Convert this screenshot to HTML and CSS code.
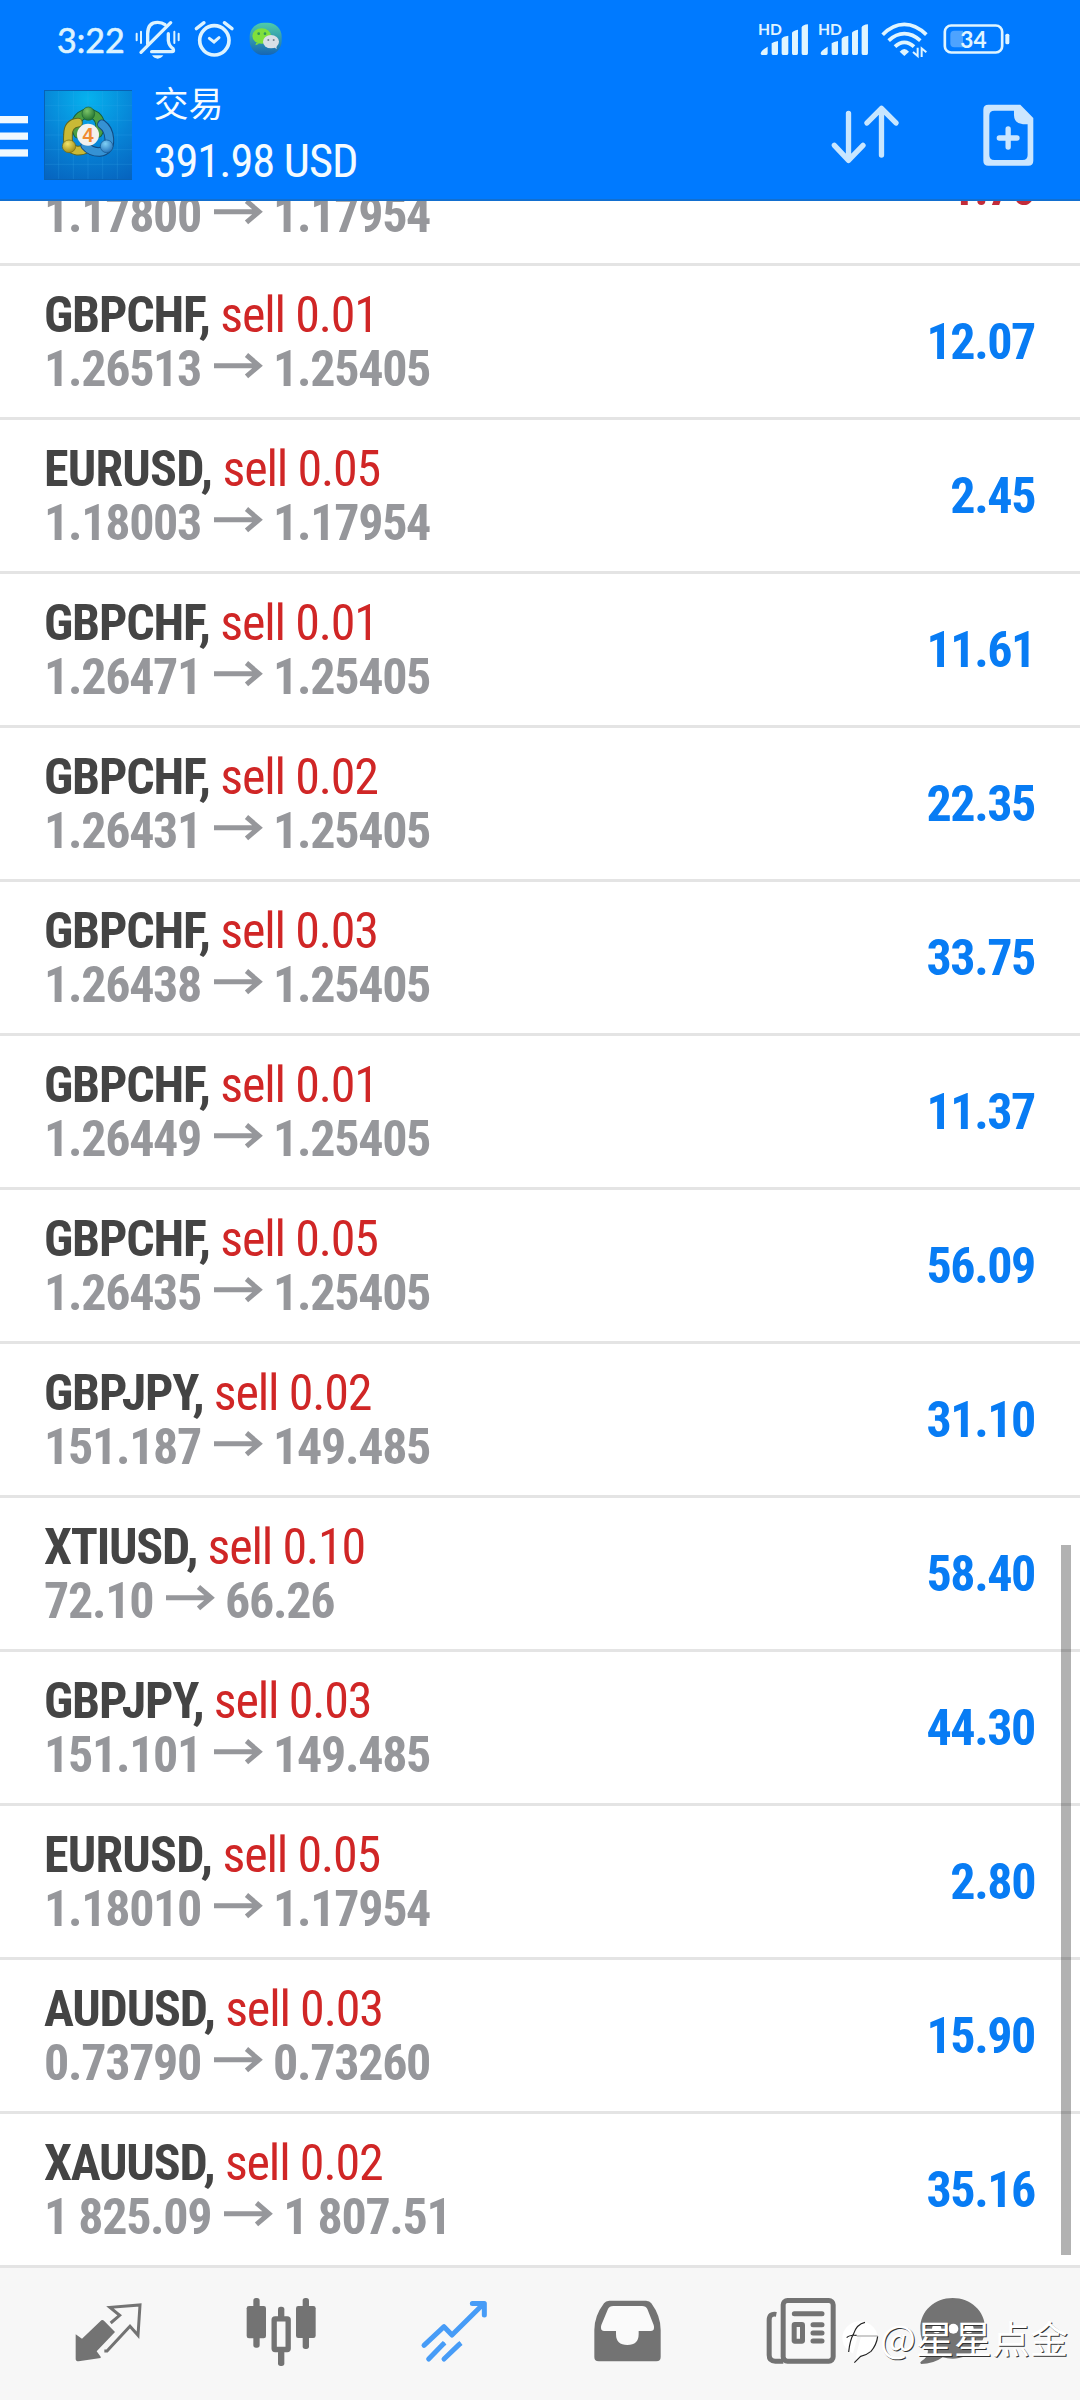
FILE: index.html
```html
<!DOCTYPE html>
<html lang="zh-CN">
<head>
<meta charset="utf-8">
<title>交易</title>
<link rel="stylesheet" href="styles.css">
</head>
<body>
<svg width="0" height="0" class="defs">
  <symbol id="arrow" viewBox="0 0 49 54">
    <path d="M0 23.700H44M32.500 13L45 23.700L32.500 34.400" fill="none" stroke="#96979b" stroke-width="5"/>
  </symbol>
  <symbol id="signal" viewBox="50 60 160 120">
    <g fill="#e0f5ff">
      <path d="M61 160q0-8 21-20v20q0 5-4 5H65q-4 0-4-5zM94 130q6-5 19-7v37q0 5-4 5h-11q-4 0-4-5zM124 116q4-7 20-9v53q0 5-4 5h-12q-4 0-4-5zM155 98q4-6 18-9v71q0 5-4 5h-10q-4 0-4-5zM184 82q4-8 19-9v87q0 5-4 5h-11q-4 0-4-5z"/>
      <text x="53" y="105" class="hd">HD</text>
    </g>
  </symbol>
</svg>
<div class="screen">
  <header class="header">
    <div class="status">
      <span class="time">3:22</span>
      <svg class="bell" viewBox="400 60 150 120" fill="none" stroke="#dcf3ff" stroke-width="10" stroke-linecap="round">
        <path d="M411 101v20M424 95v34M524 95v34M537 101v20" stroke-width="6"/>
        <path d="M424 157L513 68"/>
        <path d="M444 132V101Q444 67 474 67Q487 67 496 74M506 101V122Q508 138 520 146Q524 155 518 155H456"/>
        <path d="M457 166H491Q484 176 474 176T457 166Z" fill="#dcf3ff" stroke="none"/>
      </svg>
      <svg class="alarm" viewBox="580 60 125 120" fill="none" stroke="#dcf3ff" stroke-width="11" stroke-linecap="round">
        <circle cx="644" cy="121" r="44"/>
        <path d="M590 86L613 68M697 86L674 68" stroke-width="10"/>
        <path d="M629 115L643 126L658 113" stroke-width="9"/>
      </svg>
      <svg class="wechat" viewBox="745 60 105 120">
        <defs><linearGradient id="wg" x1="0" y1="0" x2="0" y2="1"><stop offset="0" stop-color="#4fcda8"/><stop offset="1" stop-color="#1565b5"/></linearGradient></defs>
        <rect x="750" y="68" width="96" height="97" rx="42" fill="url(#wg)"/>
        <path d="M770 128l-3 8 12-5z" fill="#7fe03c"/>
        <ellipse cx="786" cy="108" rx="28" ry="23" fill="#7fe03c"/>
        <path d="M824 142l7 6-1-10z" fill="#d9dfe6"/>
        <ellipse cx="814" cy="125" rx="24" ry="20" fill="#d9dfe6"/>
        <g fill="#2b9a5a"><circle cx="777" cy="101" r="4"/><circle cx="796" cy="101" r="4"/></g>
        <g fill="#72808c"><circle cx="806" cy="120" r="3"/><circle cx="822" cy="120" r="3"/></g>
      </svg>
      <div class="status-right">
        <svg class="signal"><use href="#signal"/></svg>
        <svg class="signal signal-2"><use href="#signal"/></svg>
        <svg class="wifi" viewBox="418 60 150 120" fill="none" stroke="#e0f5ff">
          <path d="M426 104Q456 73 491 73T557 104" stroke-width="11"/>
          <path d="M444 122Q466 101 491 101T539 122" stroke-width="11"/>
          <path d="M463 140Q476 127 491 127T520 140" stroke-width="11"/>
          <path d="M477 155Q491 139 505 155L491 168Z" fill="#e0f5ff" stroke="none"/>
          <path d="M531 143V168L517 156M543 171V145L557 157" stroke-width="6"/>
        </svg>
        <svg class="battery" viewBox="605 60 210 120">
          <rect x="613.500" y="76.500" width="172" height="81" rx="19" fill="none" stroke="#e0f5ff" stroke-width="8"/>
          <path d="M642 92H668V142H642Q630 142 630 130V104Q630 92 642 92Z" fill="#4da3ff"/>
          <rect x="795" y="101" width="12" height="32" rx="5" fill="#e0f5ff"/>
          <text x="660" y="143" class="level">34</text>
        </svg>
      </div>
    </div>
    <div class="appbar">
      <svg class="menu" viewBox="0 0 28 41" fill="#f0f9ff"><rect width="28" height="7.300"/><rect y="16.500" width="28" height="7.300"/><rect y="33.300" width="28" height="7.300"/></svg>
      <svg class="logo" viewBox="12 15 264 270">
        <defs>
          <radialGradient id="lb" cx=".5" cy=".1" r="1"><stop offset="0" stop-color="#06b2ee"/><stop offset=".55" stop-color="#0783d6"/><stop offset="1" stop-color="#0664bf"/></radialGradient>
          <radialGradient id="gr" cx=".4" cy=".3" r=".8"><stop offset="0" stop-color="#7cc468"/><stop offset="1" stop-color="#176a2a"/></radialGradient>
          <radialGradient id="ye" cx=".4" cy=".3" r=".8"><stop offset="0" stop-color="#f0e46c"/><stop offset="1" stop-color="#94820e"/></radialGradient>
          <radialGradient id="bl" cx=".4" cy=".3" r=".8"><stop offset="0" stop-color="#7fd0f6"/><stop offset="1" stop-color="#1a68b4"/></radialGradient>
        </defs>
        <rect x="12" y="15" width="264" height="270" fill="url(#lb)"/>
        <path d="M56 15V285M100 15V285M144 15V285M188 15V285M232 15V285M12 62H276M12 106H276M12 150H276M12 194H276M12 238H276" stroke="#3fb0ee" stroke-opacity=".3" stroke-width="2"/>
        <path d="M12 16.500H276M13.500 15V285M12 283.500H276" stroke="#0862b4" stroke-width="3" fill="none"/>
        <g fill="none" stroke-linecap="round">
          <path d="M114 146Q98 114 122 93Q144 78 168 93Q190 114 174 144" stroke="#175f3c" stroke-width="29"/>
          <path d="M114 146Q98 114 122 93Q144 78 168 93Q190 114 174 144" stroke="#4c9f43" stroke-width="23"/>
          <path d="M114 113Q84 116 84 150Q80 192 112 197Q128 198 144 188" stroke="#5e6721" stroke-width="29"/>
          <path d="M114 113Q84 116 84 150Q80 192 112 197Q128 198 144 188" stroke="#c9b936" stroke-width="23"/>
          <path d="M186 118Q206 132 208 162Q210 197 178 201Q152 201 136 182" stroke="#124a80" stroke-width="29"/>
          <path d="M186 118Q206 132 208 162Q210 197 178 201Q152 201 136 182" stroke="#3592d4" stroke-width="23"/>
        </g>
        <ellipse cx="145" cy="86" rx="19" ry="20" fill="url(#gr)" stroke="#196135" stroke-width="2"/>
        <ellipse cx="87" cy="184" rx="20" ry="19" fill="url(#ye)" stroke="#6d6717" stroke-width="2"/>
        <ellipse cx="200" cy="184" rx="19" ry="19" fill="url(#bl)" stroke="#15568e" stroke-width="2"/>
        <circle cx="144" cy="149" r="33" fill="#f3f1ee"/>
        <text x="144" y="171" class="four">4</text>
      </svg>
      <div class="titles">
        <div class="title">交易</div>
        <div class="balance">391.98 USD</div>
      </div>
      <svg class="sort" viewBox="270 310 210 190" fill="none" stroke="#c8e6ff" stroke-width="16" stroke-linecap="round" stroke-linejoin="round">
        <path d="M325.500 341V482M283 437L325.500 482L369 437M424.500 466V326M381 370L424.500 326L468 370"/>
      </svg>
      <svg class="doc" viewBox="725 308 160 192">
        <path fill="#cbe6ff" fill-rule="evenodd" d="M744 313H840L879 353V481Q879 496 864 496H744Q729 496 729 481V328Q729 313 744 313ZM762 331Q747 331 747 346V464Q747 479 762 479H847Q862 479 862 464V372H848Q822 370 821 344V331Z"/>
        <path d="M777 413H830M803.500 386V440" stroke="#cbe6ff" stroke-width="16" stroke-linecap="round"/>
      </svg>
    </div>
  </header>
  <main class="list">
    <div class="row first"><div class="info"><div class="deal"><b>EURUSD,</b> sell 0.01</div><div class="prices">1.17800<svg><use href="#arrow"/></svg>1.17954</div></div><div class="profit loss">-1.70</div></div>
    <div class="row"><div class="info"><div class="deal"><b>GBPCHF,</b> sell 0.01</div><div class="prices">1.26513<svg><use href="#arrow"/></svg>1.25405</div></div><div class="profit">12.07</div></div>
    <div class="row"><div class="info"><div class="deal"><b class="wide">EURUSD,</b> sell 0.05</div><div class="prices">1.18003<svg><use href="#arrow"/></svg>1.17954</div></div><div class="profit">2.45</div></div>
    <div class="row"><div class="info"><div class="deal"><b>GBPCHF,</b> sell 0.01</div><div class="prices">1.26471<svg><use href="#arrow"/></svg>1.25405</div></div><div class="profit">11.61</div></div>
    <div class="row"><div class="info"><div class="deal"><b>GBPCHF,</b> sell 0.02</div><div class="prices">1.26431<svg><use href="#arrow"/></svg>1.25405</div></div><div class="profit">22.35</div></div>
    <div class="row"><div class="info"><div class="deal"><b>GBPCHF,</b> sell 0.03</div><div class="prices">1.26438<svg><use href="#arrow"/></svg>1.25405</div></div><div class="profit">33.75</div></div>
    <div class="row"><div class="info"><div class="deal"><b>GBPCHF,</b> sell 0.01</div><div class="prices">1.26449<svg><use href="#arrow"/></svg>1.25405</div></div><div class="profit">11.37</div></div>
    <div class="row"><div class="info"><div class="deal"><b>GBPCHF,</b> sell 0.05</div><div class="prices">1.26435<svg><use href="#arrow"/></svg>1.25405</div></div><div class="profit">56.09</div></div>
    <div class="row"><div class="info"><div class="deal"><b>GBPJPY,</b> sell 0.02</div><div class="prices">151.187<svg><use href="#arrow"/></svg>149.485</div></div><div class="profit">31.10</div></div>
    <div class="row"><div class="info"><div class="deal"><b>XTIUSD,</b> sell 0.10</div><div class="prices">72.10<svg><use href="#arrow"/></svg>66.26</div></div><div class="profit">58.40</div></div>
    <div class="row"><div class="info"><div class="deal"><b>GBPJPY,</b> sell 0.03</div><div class="prices">151.101<svg><use href="#arrow"/></svg>149.485</div></div><div class="profit">44.30</div></div>
    <div class="row"><div class="info"><div class="deal"><b class="wide">EURUSD,</b> sell 0.05</div><div class="prices">1.18010<svg><use href="#arrow"/></svg>1.17954</div></div><div class="profit">2.80</div></div>
    <div class="row"><div class="info"><div class="deal"><b>AUDUSD,</b> sell 0.03</div><div class="prices">0.73790<svg><use href="#arrow"/></svg>0.73260</div></div><div class="profit">15.90</div></div>
    <div class="row"><div class="info"><div class="deal"><b>XAUUSD,</b> sell 0.02</div><div class="prices">1 825.09<svg><use href="#arrow"/></svg>1 807.51</div></div><div class="profit">35.16</div></div>
    <div class="scrollbar"></div>
  </main>
  <nav class="nav">
    <svg viewBox="57 75 240 240">
      <path d="M77 208L96 221L154 166Q158 163 162 167L195 201L140 259L152 275V279L86 289Q77 289 77 282Z" fill="#737373"/>
      <path d="M182 174L209 151L180 127L270 120L264 211L240 184L171 258H163" fill="none" stroke="#737373" stroke-width="9"/>
    </svg>
    <svg viewBox="576 75 240 240" fill="#737373">
      <rect x="610" y="99" width="19" height="149" rx="8"/><rect x="590" y="123" width="58" height="97" rx="7"/>
      <rect x="684" y="125" width="19" height="35" rx="8"/><rect x="684" y="255" width="19" height="48" rx="8"/>
      <rect x="672.500" y="161.500" width="42" height="92" rx="3" fill="none" stroke="#737373" stroke-width="16"/>
      <rect x="758" y="99" width="19" height="153" rx="8"/><rect x="738" y="123" width="59" height="96" rx="7"/>
    </svg>
    <svg viewBox="45 75 240 240" fill="none" stroke="#479cf7" stroke-width="15" stroke-linecap="round" stroke-linejoin="round">
      <path d="M72 241L132 185L156 210L250 117M217 115.500H253V150"/>
      <path d="M236 112H258V136Z" fill="#479cf7" stroke="none"/>
      <path d="M86 282L129 238M132 282L177 239"/>
      <path d="M130 237L134 233M178 238L183 234" stroke-linecap="butt"/>
    </svg>
    <svg viewBox="564 75 240 240">
      <path fill="#737373" d="M628 107H738Q749 107 754 115Q782 153 782 195V276Q782 289 769 289H596Q583 289 583 276V195Q583 153 612 115Q617 107 628 107Z"/>
      <path fill="#fafafa" d="M640 123Q628 123 624 132L604 180Q599 197 612 198H648V207Q648 240 682 240T716 207V198H753Q766 197 761 180L742 132Q738 123 726 123Z"/>
    </svg>
    <svg viewBox="33 75 240 240" fill="none" stroke="#737373" stroke-width="15">
      <rect x="99.500" y="106.500" width="150" height="182" rx="13"/>
      <path d="M79 148Q57.500 144 57.500 166V270Q57.500 288.500 76 288.500H100"/>
      <path d="M133 146H216M189 179H216M189 204H216M189 228H216" stroke-linecap="round"/>
      <rect x="132.500" y="178.500" width="25" height="50" rx="2"/>
    </svg>
    <svg class="chat" viewBox="489 75 240 240">
      <path fill="#737373" d="M608 99C662 99 705 138 705 190C705 245 660 281 608 281Q592 281 578 277Q550 297 513 297Q508 293 514 289Q533 277 534 257Q511 230 511 190C511 138 554 99 608 99Z"/>
      <g fill="#fff"><circle cx="560" cy="191" r="14"/><circle cx="610" cy="191" r="15"/><circle cx="657" cy="191" r="14"/></g>
    </svg>
  </nav>
  <div class="watermark">
    <svg viewBox="270 160 120 144">
      <ellipse cx="330" cy="220" rx="53" ry="50" fill="#fff"/>
      <path d="M316 262L312 294Q345 272 370 254Z" fill="#fff"/>
      <path d="M328 216L315 264L312 290" fill="none" stroke="#f7f7f7" stroke-width="10"/>
      <path d="M345 173Q320 178 310 209Q300 225 296 262M290 219Q298 210 320 212M383 215Q380 240 363 260Q350 271 332 275L313 294" fill="none" stroke="#222" stroke-width="3.500"/>
      <path d="M320 214H383" stroke="#999" stroke-width="3"/>
    </svg>
    <span>@星星点金</span>
  </div>
</div>
</body>
</html>
```
FILE: styles.css
```css
body {
  margin: 0;
  background: #fff;
  font-family: "Roboto Condensed", Roboto, "Noto Sans CJK SC", sans-serif;
}
.defs { position: absolute; }
svg { display: block; flex: none; }
.screen {
  position: relative;
  width: 1080px;
  height: 2400px;
  overflow: hidden;
  display: flex;
  flex-direction: column;
}

/* Header */
.header {
  box-sizing: border-box;
  height: 201px;
  background: #007aff;
  border-bottom: 2px solid #126fd0;
}
.status {
  display: flex;
  box-sizing: border-box;
  height: 71px;
  padding: 20px 68px 0 57px;
}
.status svg { height: 40px; }
.time {
  width: 76.3px;
  font: 34px/40px Lato, sans-serif;
  color: #dcf3ff;
  -webkit-text-stroke: 0.6px #dcf3ff;
}
.bell { width: 50px; }
.alarm { width: 41.7px; margin-left: 10px; }
.wechat { width: 35px; margin-left: 13.3px; }
.status-right { display: flex; margin-left: auto; }
.signal { width: 53.3px; }
.signal-2 { margin-left: 6.7px; }
.wifi { width: 50px; margin-left: 9.3px; }
.battery { width: 70px; margin-left: 12.4px; }
.hd { font: 700 47px Lato, sans-serif; }
.level { font: 700 68px Lato, sans-serif; fill: #e0f5ff; }
.four { font: 700 60px "Liberation Sans", sans-serif; fill: #f08a30; text-anchor: middle; }

.appbar {
  display: flex;
  align-items: center;
  height: 128px;
  padding-right: 45px;
}
.menu { width: 28px; height: 41px; margin: 3px 16px 0 0; }
.logo { width: 88px; height: 90px; }
.titles {
  display: flex;
  flex-direction: column;
  gap: 10px;
  margin-left: 21.5px;
  margin-right: auto;
  color: #f4fbff;
  white-space: nowrap;
}
.title { font: 35px/42px "Noto Sans CJK SC", sans-serif; }
.balance { font-size: 46.5px; line-height: 56px; letter-spacing: -1.05px; }
.sort { width: 70px; height: 63.3px; margin-right: 81.7px; }
.doc { width: 53.3px; height: 64px; }

/* Positions */
.list {
  position: relative;
  height: 2064px;
  overflow: hidden;
}
.row {
  display: flex;
  justify-content: space-between;
  height: 151px;
  padding: 0 45px 0 44px;
  border-bottom: 3px solid #e4e4e4;
  font-size: 50px;
  line-height: 54px;
  white-space: pre;
}
.first { margin-top: -89px; }
.info { padding-top: 22px; }
.deal { color: #d02626; letter-spacing: -1.15px; }
.deal b { color: #444; letter-spacing: -1.2px; }
.deal .wide { letter-spacing: -0.8px; }
.prices {
  display: flex;
  color: #96979b;
  font-weight: 700;
  letter-spacing: -1.3px;
}
.prices svg { width: 49px; height: 54px; margin: 0 10px 0 13px; }
.profit {
  line-height: 153px;
  font-weight: 700;
  letter-spacing: -1.4px;
  color: #087cf4;
}
.loss { color: #c32c3a; }
.scrollbar {
  position: absolute;
  left: 1061px;
  top: 1344px;
  width: 10px;
  height: 710px;
  background: rgba(0, 0, 0, 0.3);
}

/* Bottom navigation */
.nav {
  display: flex;
  box-sizing: border-box;
  height: 135px;
  padding: 22px 0 0 69px;
  border-top: 3px solid #e4e4e4;
  background: #f7f7f7;
}
.nav svg { width: 80px; height: 80px; margin-right: 93px; }
.nav svg:nth-child(5) { margin-right: 72px; }
.nav .chat { margin-right: 0; }

.watermark {
  position: absolute;
  left: 840px;
  top: 2311px;
  display: flex;
  color: #fff;
  font: 38px/52px "Noto Sans CJK SC", sans-serif;
  white-space: nowrap;
  text-shadow: 1px 1px 0 #333;
}
.watermark svg { width: 40px; height: 48px; margin: 7px 0 0 0; }
```
